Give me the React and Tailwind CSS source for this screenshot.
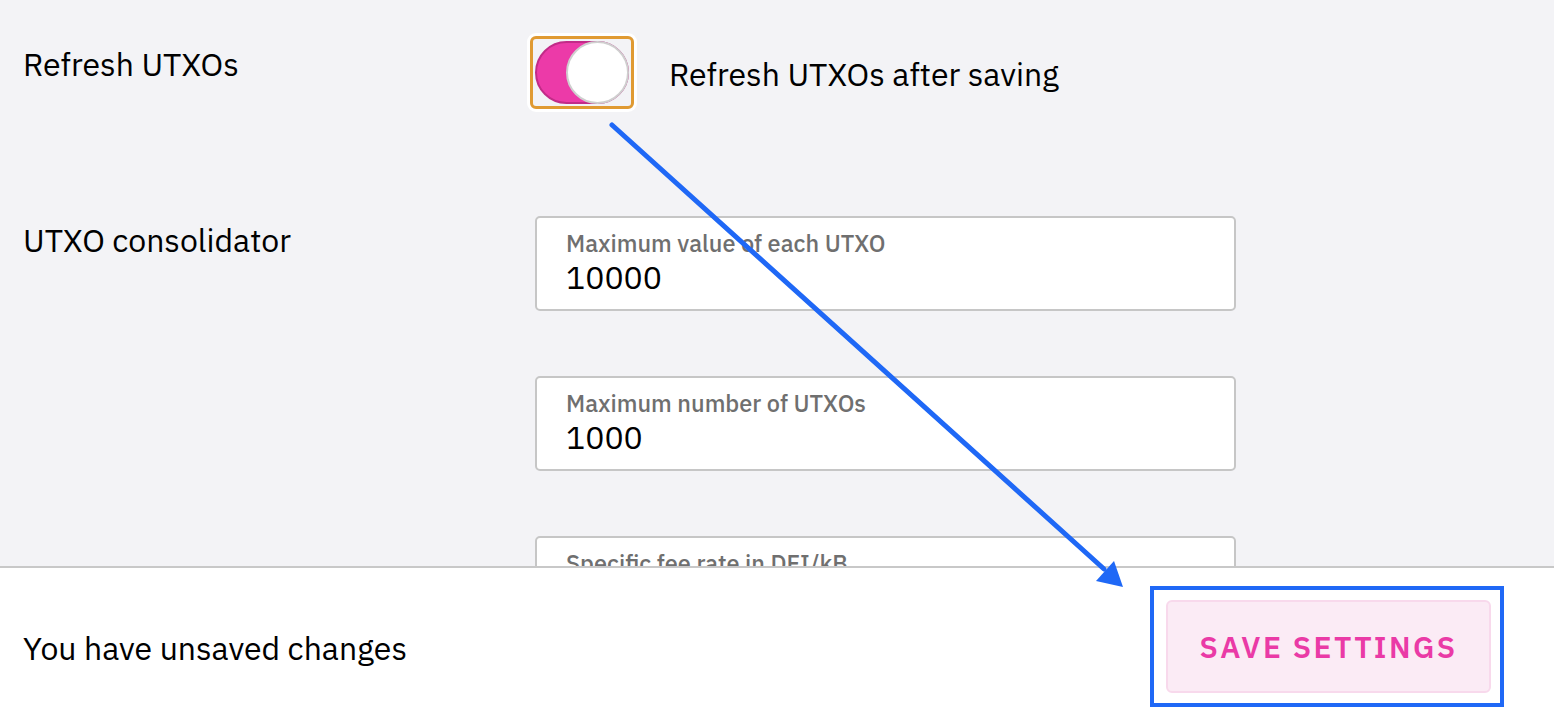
import React, { useState } from "react";

const FONT = { fontFamily: '"IBM Plex Sans", "Noto Sans", "Open Sans", sans-serif' };

const NumberField = ({ label, value }) => (
  <div className="w-[701px] h-[95px] shrink-0 bg-white border-2 border-[#c6c6c6] rounded-[5px] pl-[29px] pt-[10px]">
    <div className="text-[23.5px] leading-[30px] font-medium text-[#6f6f6f]">{label}</div>
    <div className="text-[32px] leading-[38px] text-black">{value}</div>
  </div>
);

const Toggle = ({ on, onChange }) => (
  <div className="-ml-[5px] -mt-[4px] rounded-[6px] shadow-[0_0_0_3px_white] border-[3px] border-[#e09a32] p-[2px]">
    <button
      onClick={() => onChange(!on)}
      className="relative block w-[94px] h-[63px] rounded-full bg-[#ec3aa8] border-2 border-[#c22b88]"
    >
      <span className="absolute right-[-2px] top-[-2px] w-[63px] h-[63px] rounded-full bg-white border-2 border-[#cfcfcf]" />
    </button>
  </div>
);

export default function App() {
  const [refresh, setRefresh] = useState(true);

  return (
    <div className="relative w-[1554px] h-[722px] flex flex-col overflow-hidden text-black" style={FONT}>
      <div className="h-[566px] bg-[#f3f3f6] pl-[23px] pt-[40px] overflow-hidden">
        {/* refresh row */}
        <div className="flex">
          <div className="w-[512px] text-[32px] leading-[48px]">Refresh UTXOs</div>
          <div className="flex items-center">
            <Toggle on={refresh} onChange={setRefresh} />
            <span className="ml-[35px] text-[32px] leading-[40px] -mt-[2px]">Refresh UTXOs after saving</span>
          </div>
        </div>

        {/* consolidator row */}
        <div className="flex mt-[107px]">
          <div className="w-[512px] text-[32px] leading-[48px]">UTXO consolidator</div>
          <div className="flex flex-col gap-[65px]">
            <NumberField label="Maximum value of each UTXO" value="10000" />
            <NumberField label="Maximum number of UTXOs" value="1000" />
            <NumberField label="Specific fee rate in DFI/kB" value="" />
          </div>
        </div>
      </div>

      <div className="flex-1 bg-white border-t-2 border-[#c8c8c8] flex items-center justify-between pl-[23px] pr-[63px]">
        <span className="text-[32px] leading-[40px] mt-[6px]">You have unsaved changes</span>
        <button className="w-[325px] h-[93px] mt-[2px] rounded-[6px] bg-[#fbebf5] border-2 border-[#f8d9ec] text-[#ea3aa6] text-[30px] font-semibold tracking-[0.08em]">
          SAVE SETTINGS
        </button>
      </div>

      {/* annotation overlay */}
      <svg className="absolute inset-0 pointer-events-none" width="1554" height="722">
        <line x1="612" y1="125" x2="1104" y2="569" stroke="#1f68f6" strokeWidth="5" strokeLinecap="round" />
        <polygon points="1123,587 1096,581 1114,561" fill="#1f68f6" />
        <rect x="1152" y="588" width="350" height="117" fill="none" stroke="#1f68f6" strokeWidth="4" />
      </svg>
    </div>
  );
}
